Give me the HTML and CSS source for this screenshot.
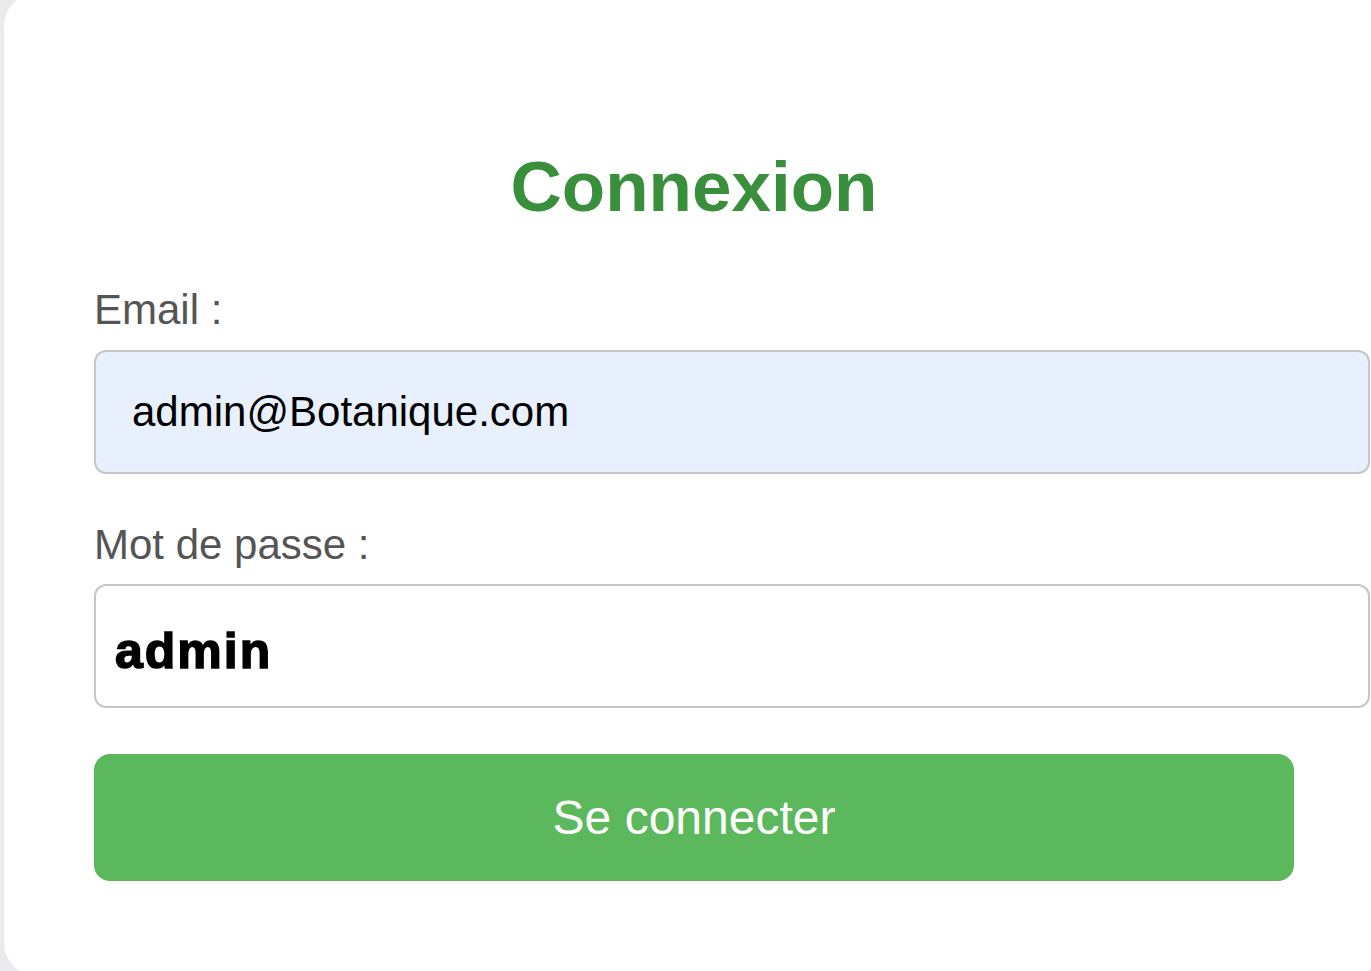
FILE: index.html
```html
<!doctype html>
<html lang="fr">
  <head>
    <meta charset="utf-8">
    <title>Connexion</title>
    <link rel="stylesheet" href="styles.css">
  </head>
  <body>
    <div class="login-card">
      <h2>Connexion</h2>
      <form class="login-form" onsubmit="return false">
        <label for="email">Email :</label>
        <input type="email" id="email" class="field field-autofill" value="admin@Botanique.com">

        <label for="password" class="label-pass">Mot de passe :</label>
        <input type="text" id="password" class="field field-pass" value="admin">

        <button type="submit" class="btn-login">Se connecter</button>
      </form>
    </div>
  </body>
</html>
```

FILE: styles.css
```css
html,
body {
    margin: 0;
    overflow: hidden;
}

body {
    font-family: "Liberation Sans", Arial, sans-serif;
    background: #ebebef;
    height: 971px;
}

.login-card {
    background: #fff;
    margin: -6px 0 0 4px;
    width: 1200px;
    padding: 150px 90px 94px 90px;
    border-radius: 32px;
}

.login-card h2 {
    margin: 0;
    font-size: 71px;
    line-height: 85px;
    font-weight: bold;
    text-align: center;
    color: #3a8f3d;
}

.login-form label {
    display: block;
    margin-top: 56px;
    font-size: 42px;
    line-height: 50px;
    color: #555;
}

.login-form .label-pass {
    margin-top: 46px;
}

.field {
    display: block;
    width: 100%;
    height: 120px;
    margin: 15px 0 0 0;
    padding: 0 36px;
    border: 2px solid #c6c6c6;
    border-radius: 12px;
    font-family: "Liberation Sans", Arial, sans-serif;
    font-size: 42px;
    color: #000;
    background: #fff;
    outline: none;
}

.field-autofill {
    background: #e8f0fe;
}

.field-pass {
    margin-top: 14px;
    height: 110px;
    padding: 10px 53px 0 19px;
    font-size: 50px;
    font-weight: bold;
    letter-spacing: 2px;
    -webkit-text-stroke: 1.5px #000;
}

.btn-login {
    display: block;
    width: 100%;
    height: 127px;
    margin-top: 46px;
    border: none;
    border-radius: 16px;
    background: #5cb85c;
    color: #fff;
    font-family: "Liberation Sans", Arial, sans-serif;
    font-size: 48px;
    cursor: pointer;
}
```
